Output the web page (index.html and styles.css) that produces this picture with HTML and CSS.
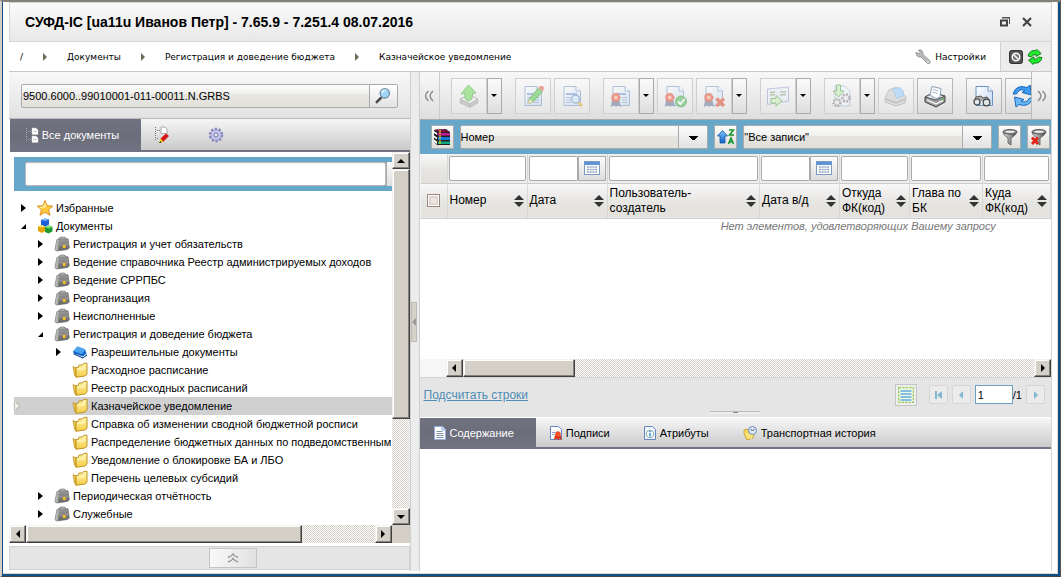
FILE: index.html
```html
<!DOCTYPE html>
<html lang="ru">
<head>
<meta charset="utf-8">
<title>СУФД-IC</title>
<link rel="stylesheet" href="styles.css">
</head>
<body>
<svg class="sprite" aria-hidden="true">
  <defs>
    <linearGradient id="gold" x1="0" y1="0" x2="0" y2="1"><stop offset="0" stop-color="#fff6a8"/><stop offset="1" stop-color="#f5cc48"/></linearGradient>
    <linearGradient id="steel" x1="0" y1="0" x2="1" y2="0"><stop offset="0" stop-color="#eee"/><stop offset=".5" stop-color="#999"/><stop offset="1" stop-color="#444"/></linearGradient>
    <linearGradient id="page" x1="0" y1="0" x2="1" y2="1"><stop offset="0" stop-color="#fff"/><stop offset="1" stop-color="#c3d8f2"/></linearGradient>
    <linearGradient id="bluearrow" x1="0" y1="0" x2="0" y2="1"><stop offset="0" stop-color="#7cc4ff"/><stop offset="1" stop-color="#1663c4"/></linearGradient>
    <linearGradient id="leather" x1="0" y1="0" x2="0" y2="1"><stop offset="0" stop-color="#9a9a9a"/><stop offset="1" stop-color="#666"/></linearGradient>
  </defs>
  <symbol id="i-star" viewBox="0 0 16 16"><path d="M8 .5l2.200 5.200 5.500.4-4.200 3.600 1.500 5.600L8 12.300l-5 3 1.400-5.600L.3 6.100l5.500-.4z" fill="#ffc83d" stroke="#d88a1c" stroke-width=".9"/><path d="M8 2.500l1.400 4-4.900 2.200L2.500 6.900l3.900-.4z" fill="#fff0a0"/></symbol>
  <symbol id="i-cubes" viewBox="0 0 16 16"><path d="M4 2l4-1.500 4 1v5L8.500 8.500 4 7z" fill="#1a5fd8"/><path d="M4 2l4-1.500 4 1L8.500 3z" fill="#7ab4ff"/><path d="M1 8.500l3-1.500 4 1.500v4.500l-3 2-4-2z" fill="#e2a400"/><path d="M1 8.500l3-1.500 4 1.500-3 1z" fill="#ffe568"/><path d="M8 9l4-1.500 3.500 1.500v4.500L11.500 15.500 8 14z" fill="#1f9a30"/><path d="M8 9l4-1.500L15.500 9l-4 1.500z" fill="#7be070"/></symbol>
  <symbol id="i-case" viewBox="0 0 16 16"><path d="M5.500 3.500V2.500Q5.500 1.200 7 1.200h3q1.500 0 1.500 1.300v1" fill="none" stroke="#777" stroke-width="1"/><path d="M3 3.500L5 2.800h9L15.300 12l-2 1.500L2.500 15l-1.500-1.500z" fill="url(#leather)" stroke="#666" stroke-width=".7"/><path d="M3 3.500L4.800 3.500 4 14.500l-1.500.3L1 13.500z" fill="#b4b4b4"/><path d="M5 8.500q5 1.500 9.500-.5" fill="none" stroke="#aaa" stroke-width=".7"/><path d="M9 9h2.500v3H9z" fill="#ffc21a"/></symbol>
  <symbol id="i-folder" viewBox="0 0 16 16"><path d="M1 4.500l3 1.500v9L2.500 13z" fill="#f1cf5c" stroke="#b98b12" stroke-width=".7"/><path d="M4 5.500h2L7 3h3.500l1-1.500 3.500-.3v11L13 14l-9 1.300z" fill="url(#gold)" stroke="#b98b12" stroke-width=".9"/><path d="M5 7h7V3" fill="none" stroke="#fffbd0"/></symbol>
  <symbol id="i-book" viewBox="0 0 16 16"><path d="M1 7.500L5.500 2.500 13 5.500l2 5L11 14 2 10.500z" fill="#1769c8"/><path d="M1.500 7L5.500 2.500l8 3L10 10z" fill="#4ca4f0"/><path d="M3.500 10.500L11 13l4-3.500" fill="none" stroke="#fff"/><path d="M2 10l9 4 4-3" fill="none" stroke="#063f91"/></symbol>
  <symbol id="i-lens" viewBox="0 0 20 20"><path d="M8.500 11.500L3 17" stroke="#777" stroke-width="3" stroke-linecap="round"/><path d="M7.500 12L3 16.500" stroke="#333" stroke-width="1.500" stroke-linecap="round"/><circle cx="12" cy="7" r="5.200" fill="#9fd6f5" stroke="#7892a8" stroke-width="1.500"/><path d="M9 6.500q1-3 4-3" stroke="#eefaff" stroke-width="1.500" fill="none"/></symbol>
  <symbol id="i-pages" viewBox="0 0 14 16"><path d="M1.500 1v13M3 4.500h3M3 12.500h3" stroke="#aaa" stroke-dasharray="1 1"/><path d="M7 1h4l2 2v4.500H7zM7 9h4l2 2v4.500H7z" fill="#fff" stroke="#ccc" stroke-width=".5"/><path d="M8.500 4.500h3M8.500 12.500h3" stroke="#bbb"/></symbol>
  <symbol id="i-pagesedit" viewBox="0 0 16 18"><path d="M1.500 1v13M3 4.500h3M3 12.500h2" stroke="#777" stroke-dasharray="1 1"/><path d="M7 1h4l2 2v4.500H7z" fill="#fff" stroke="#aaa"/><path d="M6.500 12.500L12 7.500l3 2.500-6 6z" fill="#d81818"/><path d="M6.500 12.500L9 16l-4 1z" fill="#ffe000"/><path d="M5 17l1.500-2 1 1.500z" fill="#111"/></symbol>
  <symbol id="i-gear" viewBox="0 0 16 16"><circle cx="8" cy="8" r="6.300" fill="none" stroke="#8081bd" stroke-width="2" stroke-dasharray="2.200 1.760"/><circle cx="8" cy="8" r="5.300" fill="#c5c6ec" stroke="#8788c0" stroke-width=".8"/><circle cx="8" cy="8" r="2" fill="#eee" stroke="#7374b0"/></symbol>
  <symbol id="i-wrench" viewBox="0 0 16 16"><path d="M1 3l3 2 1-1.500L3.500 1Q8 0 8 5.500l7 6.500q1 3-2.500 2.500L6 8Q1 8.500 1 3z" fill="#bbb" stroke="#888" stroke-width=".8"/><circle cx="13" cy="13" r=".8" fill="#fff"/></symbol>
  <symbol id="i-block" viewBox="0 0 14 14"><rect x=".5" y=".5" width="13" height="13" rx="2" fill="#555" stroke="#333"/><circle cx="7" cy="7" r="3.800" fill="#777" stroke="#fff" stroke-width="1.400"/><path d="M4.500 4.500l5 5" stroke="#fff" stroke-width="1.400"/></symbol>
  <symbol id="i-sync" viewBox="0 0 16 16"><path d="M1 7Q2.500 1 8.500 1.500L10 .5 14 4.500 9 7.500V5.500Q6 5 4.500 8z" fill="#22e830" stroke="#08780f" stroke-width=".9"/><path d="M15 8.500Q13.500 15 7 14l-1 1.500L1.500 11 7 8v2q3 1 4.500-2z" fill="#22e830" stroke="#08780f" stroke-width=".9"/></symbol>
  <symbol id="i-restore" viewBox="0 0 10 10"><path d="M2 0h8v7H9V1.500H2z" fill="#555"/><path d="M1 3.500h6V8.500H1z" fill="none" stroke="#444" stroke-width="2"/></symbol>
  <symbol id="i-close" viewBox="0 0 10 10"><path d="M1 1l8 8M9 1L1 9" stroke="#444" stroke-width="2.200"/></symbol>
  <symbol id="i-doc" viewBox="0 0 24 24"><path d="M4 2.500h12l4.500 4.500v14.500H4z" fill="url(#page)" stroke="#6c93c4"/><path d="M16 2.500V7h4.500" fill="#fff" stroke="#6c93c4"/></symbol>
  <symbol id="i-lines" viewBox="0 0 24 24"><path d="M6 9h11v2H6z" fill="#6e8fd0"/><path d="M6 13.500h5M6 16h5M6 18.500h5M13 13.500h5M13 16h5M13 18.500h5" stroke="#7d9dd0"/></symbol>
  <symbol id="i-seal" viewBox="0 0 24 24"><path d="M3 15l-1 8 3.500-2L7 23V15zM10 15l2 8-3-2-2 2v-8z" fill="#566a8c"/><circle cx="6.800" cy="13.500" r="4.300" fill="#ec4a2c" stroke="#c53014" stroke-dasharray="1.500 1"/><circle cx="6.800" cy="13.500" r="1.700" fill="#ffb8a0"/></symbol>
  <symbol id="i-send" viewBox="0 0 24 24"><path d="M3 15l9-4 9 4-8 5z" fill="#ececec" stroke="#888"/><path d="M3 15v4l10 4.500V20zM21 15v4l-8 4.500V20z" fill="#aaa" stroke="#888" stroke-width=".6"/><path d="M11.500 1L19 9l-3.500.5Q16 15 12 17q-5 0-4-7.500L4 10z" fill="#63d94c" stroke="#36a32b"/></symbol>
  <symbol id="i-pencil" viewBox="0 0 24 24"><path d="M8 15L17.500 4l4 3.500L12 18l-5 2z" fill="#48c33b" stroke="#23891f"/><path d="M17.500 4l1.500-2q3-1 4.500 2l-2 3.500z" fill="#e75848"/><path d="M8 15l4 3-5 2z" fill="#f2d9a0"/></symbol>
  <symbol id="i-find" viewBox="0 0 24 24"><path d="M18 18l4 4" stroke="#d9a820" stroke-width="2.500"/><circle cx="15.500" cy="15" r="4" fill="#c9e7ff" stroke="#5887bd" stroke-width="1.300"/></symbol>
  <symbol id="i-ok" viewBox="0 0 24 24"><circle cx="18" cy="17.500" r="5.500" fill="#41b54a" stroke="#289335"/><path d="M15 17.500l2.500 2.500 4-5" fill="none" stroke="#fff" stroke-width="2"/></symbol>
  <symbol id="i-del" viewBox="0 0 24 24"><path d="M14.500 14.500l7.500 7.500M22 14.500L14.500 22" stroke="#dc3b1c" stroke-width="3.200"/></symbol>
  <symbol id="i-card" viewBox="0 0 24 24"><path d="M1.500 5l21-2v14l-21 3.500z" fill="#e7edf8" stroke="#8a9bc8"/><path d="M4 8.500l5-.5M4 11l5-.5M14 8h6M14 11l6-.5" stroke="#7fa36c" stroke-width="1.500"/><path d="M5 14.500h5v-3l6 5.500-6 5v-3H5z" fill="#c9f4b6" stroke="#49a036"/></symbol>
  <symbol id="i-process" viewBox="0 0 24 24"><path d="M5 2h10l5 5v15H5z" fill="#eef4ff" stroke="#96a9c8"/><path d="M6.500 1v6H3l5.500 6L14 7h-3.500V1z" fill="#c0efb0" stroke="#43943a"/><circle cx="16" cy="14" r="3.500" fill="#eee" stroke="#777" stroke-width="2.500" stroke-dasharray="2 1.200"/><circle cx="7" cy="18.500" r="3.300" fill="#eee" stroke="#777" stroke-width="2.500" stroke-dasharray="1.800 1"/></symbol>
  <symbol id="i-printblue" viewBox="0 0 24 24"><path d="M1 14l4-8 7-3 10 10-1 6-9 3-11-4z" fill="#ccc" stroke="#999"/><path d="M8 5l8-1.500q4 3 4 8l-8 3q0-6-4-9.500z" fill="#8cc8ff" stroke="#6ea9df"/><path d="M2 15l10 4 9-4" fill="none" stroke="#777"/></symbol>
  <symbol id="i-print" viewBox="0 0 24 24"><path d="M2 13l8-4 12 3v6l-9 5-11-5z" fill="#999" stroke="#444"/><path d="M2 13l8-4 12 3-9 4z" fill="#e8e8e8" stroke="#555"/><path d="M7 11l2-8.500 9 2-1 8.500-4 1.500z" fill="#fff" stroke="#8aa0b8"/><path d="M10 5.500l5 1.200M9.500 8l5 1.200" stroke="#9db7d5"/><path d="M4 16l9 4 7-3.500" fill="none" stroke="#eee" stroke-width="1.500"/><circle cx="19.500" cy="15" r="1" fill="#39c23d"/></symbol>
  <symbol id="i-binocular" viewBox="0 0 24 24"><path d="M2 17l2-4 5-1 2 2 4-1 3 4" fill="#aaa" stroke="#555"/><circle cx="5" cy="18" r="3" fill="#dfe5e8" stroke="#444" stroke-width="1.200"/><circle cx="14.500" cy="18.500" r="3.300" fill="#dfe5e8" stroke="#444" stroke-width="1.200"/></symbol>
  <symbol id="i-refresh" viewBox="0 0 24 24"><path d="M2 10Q5 0 16 3.500L19 1l1.500 10L11 8.500l3-2Q8 4 5.500 10z" fill="#3f9bee" stroke="#1767bc"/><path d="M22 14Q18 24 8 20.500L5 23 3.500 13l9.500 2.500-3 2q6 2 8.500-3.500z" fill="#69b9f7" stroke="#1767bc"/></symbol>
  <symbol id="i-books" viewBox="0 0 18 18"><path d="M1 2L13 1l4 3v13H4L1 14z" fill="#222"/><path d="M4 5h13v2.500H5z" fill="#c71991"/><path d="M2 1.500h10l4 2.500H5z" fill="#861041"/><path d="M5 9h12v3H5z" fill="#1678d6"/><path d="M5 13.500h12V16H5z" fill="#10a783"/><path d="M1 3l3 2v2L1 5zM1 7.500l3 2v2l-3-2zM1 11.500l3 2V16l-3-2z" fill="#fff"/><path d="M7 2v14" stroke="#e8d22a" stroke-width="1.200" stroke-dasharray="4 1"/></symbol>
  <symbol id="i-sort" viewBox="0 0 18 18"><path d="M5.500 2.500L10.500 8H8v7H3V8H.5z" fill="url(#bluearrow)" stroke="#145cab" stroke-width=".8"/><path d="M12 2h4.500L12.500 7H17M11.500 16l2.500-6 2.500 6M12.500 14h3" stroke="#13942a" stroke-width="1.500" fill="none"/></symbol>
  <symbol id="i-funnel" viewBox="0 0 18 18"><path d="M2 4q0 3 5 6v5l3 2V10q5-3 6-6z" fill="url(#steel)" stroke="#555" stroke-width=".8"/><ellipse cx="9" cy="3.800" rx="7" ry="2.300" fill="#999" stroke="#555"/><ellipse cx="9" cy="3.800" rx="4.500" ry="1" fill="#eee"/></symbol>
  <symbol id="i-redx" viewBox="0 0 18 18"><path d="M2 9.500l6 6.500M8 9.500L2 16" stroke="#e32416" stroke-width="2.800"/></symbol>
  <symbol id="i-calendar" viewBox="0 0 16 14"><rect x=".5" y=".5" width="15" height="13" fill="#fff" stroke="#7d9cc4"/><path d="M1 1h14v3H1z" fill="#5f92d3"/><path d="M3 6h10M3 8.500h10M3 11h10" stroke="#8fa3bd" stroke-width="1.300" stroke-dasharray="2 .7"/></symbol>
  <symbol id="i-text" viewBox="0 0 12 14"><path d="M.5.500h8l3 3v10H.5z" fill="#fff" stroke="#93aee0"/><path d="M8 .5v3.500h3.500" fill="#dce7fa" stroke="#93aee0"/><path d="M2.500 5.500h6M2.500 7.500h7M2.500 9.500h7M2.500 11.500h7" stroke="#8292a8"/></symbol>
  <symbol id="i-sign" viewBox="0 0 12 14"><path d="M.5.500h8l3 3v10H.5z" fill="#fff" stroke="#6485bd"/><path d="M2 6.500h4M2 8.500h3" stroke="#95a9d0"/><path d="M5 9l-1 5 2.500-1.500L8.500 14l1-1.500L12 14l-1.500-5z" fill="#d8310e"/><circle cx="8" cy="8" r="2.700" fill="#f4512d"/></symbol>
  <symbol id="i-info" viewBox="0 0 12 14"><path d="M.5.500h8l3 3v10H.5z" fill="#eef5ff" stroke="#6485bd"/><circle cx="6" cy="8" r="3.700" fill="#fff" stroke="#8aa"/><path d="M6 7v3.500M6 5v1.200" stroke="#248bd8" stroke-width="1.500"/></symbol>
  <symbol id="i-clock" viewBox="0 0 14 14"><path d="M1 4l3-1 2 3 5 2-1 4-6 2-2-4-1-3z" fill="#f6d95c" stroke="#c79a26" stroke-width=".8"/><path d="M2 7.500l8 2.500M3 10.500l6 2" stroke="#fff0a0"/><circle cx="9.500" cy="4.500" r="4" fill="#dbe8f8" stroke="#6e88b8"/><path d="M7.500 3l2 2 2-2" fill="none" stroke="#555"/></symbol>
  <symbol id="i-rows" viewBox="0 0 16 16"><rect x=".7" y=".7" width="14.600" height="14.600" fill="#eef8e4" stroke="#9ccb62" stroke-width="1.300" stroke-dasharray="2.500 1"/><path d="M2.500 3h11v2h-11zM2.500 6h11v2h-11zM2.500 9h11v2h-11zM2.500 12h11v2h-11z" fill="#84bfdf"/></symbol>
</svg>

<div class="window">
  <header class="titlebar">
    <h1>СУФД-IC [ua11u Иванов Петр] - 7.65.9 - 7.251.4 08.07.2016</h1>
    <button class="plain" aria-label="Восстановить"><svg class="s10"><use href="#i-restore"/></svg></button>
    <button class="plain" aria-label="Закрыть"><svg class="s10"><use href="#i-close"/></svg></button>
  </header>

  <div class="crumbbar">
    <nav class="crumbs">
      <a href="#">/</a><i class="sep"></i>
      <a href="#">Документы</a><i class="sep"></i>
      <a href="#">Регистрация и доведение бюджета</a><i class="sep"></i>
      <a href="#">Казначейское уведомление</a>
    </nav>
    <button class="plain settings"><svg class="s16"><use href="#i-wrench"/></svg>Настройки</button>
    <div class="status">
      <button class="plain" aria-label="Остановить"><svg class="s14"><use href="#i-block"/></svg></button>
      <button class="plain" aria-label="Синхронизация"><svg class="s16"><use href="#i-sync"/></svg></button>
    </div>
  </div>

  <main class="work">
    <section class="side">
      <div class="search">
        <div class="searchbox">
          <input type="text" aria-label="Организация" value="9500.6000..99010001-011-00011.N.GRBS">
          <button aria-label="Найти"><svg class="s18"><use href="#i-lens"/></svg></button>
        </div>
      </div>
      <div class="tabs sidetabs">
        <button class="tab active"><svg class="tabicon"><use href="#i-pages"/></svg>Все документы</button>
        <button class="tab icononly" aria-label="Правка дерева"><svg class="s18"><use href="#i-pagesedit"/></svg></button>
        <button class="tab icononly" aria-label="Параметры"><svg class="s16"><use href="#i-gear"/></svg></button>
      </div>
      <div class="treewrap">
        <div class="treepane">
          <div class="treefilter"><input type="text" aria-label="Фильтр дерева"><button aria-label="Найти в дереве"></button></div>
          <ul class="tree">
            <li><i class="closed"></i><svg class="s16"><use href="#i-star"/></svg>Избранные</li>
            <li><i class="open"></i><svg class="s16"><use href="#i-cubes"/></svg>Документы</li>
            <li class="l1"><i class="closed"></i><svg class="s16"><use href="#i-case"/></svg>Регистрация и учет обязательств</li>
            <li class="l1"><i class="closed"></i><svg class="s16"><use href="#i-case"/></svg>Ведение справочника Реестр администрируемых доходов</li>
            <li class="l1"><i class="closed"></i><svg class="s16"><use href="#i-case"/></svg>Ведение СРРПБС</li>
            <li class="l1"><i class="closed"></i><svg class="s16"><use href="#i-case"/></svg>Реорганизация</li>
            <li class="l1"><i class="closed"></i><svg class="s16"><use href="#i-case"/></svg>Неисполненные</li>
            <li class="l1"><i class="open"></i><svg class="s16"><use href="#i-case"/></svg>Регистрация и доведение бюджета</li>
            <li class="l2"><i class="closed"></i><svg class="s16"><use href="#i-book"/></svg>Разрешительные документы</li>
            <li class="l2"><i></i><svg class="s16"><use href="#i-folder"/></svg>Расходное расписание</li>
            <li class="l2"><i></i><svg class="s16"><use href="#i-folder"/></svg>Реестр расходных расписаний</li>
            <li class="l2 selected"><i></i><svg class="s16"><use href="#i-folder"/></svg>Казначейское уведомление</li>
            <li class="l2"><i></i><svg class="s16"><use href="#i-folder"/></svg>Справка об изменении сводной бюджетной росписи</li>
            <li class="l2"><i></i><svg class="s16"><use href="#i-folder"/></svg>Распределение бюджетных данных по подведомственным</li>
            <li class="l2"><i></i><svg class="s16"><use href="#i-folder"/></svg>Уведомление о блокировке БА и ЛБО</li>
            <li class="l2"><i></i><svg class="s16"><use href="#i-folder"/></svg>Перечень целевых субсидий</li>
            <li class="l1"><i class="closed"></i><svg class="s16"><use href="#i-case"/></svg>Периодическая отчётность</li>
            <li class="l1"><i class="closed"></i><svg class="s16"><use href="#i-case"/></svg>Служебные</li>
          </ul>
        </div>
        <div class="scroll vertical">
          <button class="up" aria-label="Вверх"></button><div class="thumb"></div><div class="track"></div><button class="down" aria-label="Вниз"></button>
        </div>
      </div>
      <div class="scroll horizontal sidescroll">
        <button class="left" aria-label="Влево"></button><div class="thumb"></div><div class="track"></div><button class="right" aria-label="Вправо"></button><div class="corner"></div>
      </div>
      <div class="sidefoot"><button aria-label="Свернуть"><svg viewBox="0 0 12 10"><path d="M1 4.500Q5 3 6 1q1 2 5 3.500M1 9Q5 7.500 6 5.500 7 7.500 11 9" fill="none" stroke="#999" stroke-width="1.400"/></svg></button></div>
    </section>

    <div class="splitter"><button aria-label="Свернуть панель"></button></div>

    <section class="content">
      <div class="toolbar">
        <button class="more" aria-label="Назад"><svg viewBox="0 0 10 12"><path d="M4.500 1Q2 3 1.500 6 2 9 4.500 11M9 1Q6.500 3 6 6q.5 3 3 5" fill="none" stroke="#888" stroke-width="1.500"/></svg></button>
        <div class="tools">
          <div class="group"><div class="split"><button class="tool off" aria-label="Отправить"><svg class="s24"><use href="#i-send"/></svg></button><button class="drop" aria-label="Ещё"></button></div></div>
          <div class="group">
            <button class="tool off" aria-label="Изменить"><svg class="s24"><use href="#i-doc"/><use href="#i-lines"/><use href="#i-pencil"/></svg></button>
            <button class="tool off" aria-label="Просмотр"><svg class="s24"><use href="#i-doc"/><use href="#i-lines"/><use href="#i-find"/></svg></button>
          </div>
          <div class="group">
            <div class="split"><button class="tool off" aria-label="Подписать"><svg class="s24"><use href="#i-doc"/><use href="#i-lines"/><use href="#i-seal"/></svg></button><button class="drop" aria-label="Ещё"></button></div>
            <button class="tool off" aria-label="Проверить подпись"><svg class="s24"><use href="#i-doc"/><use href="#i-seal"/><use href="#i-ok"/></svg></button>
            <div class="split"><button class="tool off" aria-label="Удалить подпись"><svg class="s24"><use href="#i-doc"/><use href="#i-seal"/><use href="#i-del"/></svg></button><button class="drop" aria-label="Ещё"></button></div>
          </div>
          <div class="group"><div class="split"><button class="tool off" aria-label="Передать"><svg class="s24"><use href="#i-card"/></svg></button><button class="drop" aria-label="Ещё"></button></div></div>
          <div class="group">
            <div class="split"><button class="tool off" aria-label="Обработать"><svg class="s24"><use href="#i-process"/></svg></button><button class="drop" aria-label="Ещё"></button></div>
            <button class="tool off" aria-label="Печать формы"><svg class="s24"><use href="#i-printblue"/></svg></button>
            <button class="tool" aria-label="Печать"><svg class="s24"><use href="#i-print"/></svg></button>
          </div>
          <div class="group">
            <button class="tool" aria-label="Поиск"><svg class="s24"><use href="#i-doc"/><use href="#i-binocular"/></svg></button>
            <button class="tool" aria-label="Обновить"><svg class="s24"><use href="#i-refresh"/></svg></button>
          </div>
        </div>
        <button class="more next" aria-label="Вперёд"><svg viewBox="0 0 10 12"><path d="M1 1q2.500 2 3 5-.5 3-3 5M5.500 1q2.500 2 3 5-.5 3-3 5" fill="none" stroke="#888" stroke-width="1.500"/></svg></button>
      </div>

      <div class="filterbar">
        <button class="square" aria-label="Справочник"><svg class="s18"><use href="#i-books"/></svg></button>
        <div class="combo"><select aria-label="Поле"><option>Номер</option></select></div>
        <button class="square" aria-label="Сортировка"><svg class="s18"><use href="#i-sort"/></svg></button>
        <div class="combo"><select aria-label="Фильтр"><option>"Все записи"</option></select></div>
        <button class="square" aria-label="Фильтровать"><svg class="s18"><use href="#i-funnel"/></svg></button>
        <button class="square" aria-label="Сбросить фильтр"><svg class="s18"><use href="#i-funnel"/><use href="#i-redx"/></svg></button>
      </div>

      <div class="gridarea">
        <table class="grid">
          <colgroup><col class="c27"><col class="c80"><col class="c80"><col><col class="c80"><col class="c70"><col class="c73"><col class="c68"></colgroup>
          <thead>
            <tr class="filters">
              <td></td>
              <td><input type="text" aria-label="Номер"></td>
              <td><div class="date"><input type="text" aria-label="Дата"><button aria-label="Календарь"><svg class="cal"><use href="#i-calendar"/></svg></button></div></td>
              <td><input type="text" aria-label="Пользователь-создатель"></td>
              <td><div class="date"><input type="text" aria-label="Дата в/д"><button aria-label="Календарь"><svg class="cal"><use href="#i-calendar"/></svg></button></div></td>
              <td><input type="text" aria-label="Откуда ФК(код)"></td>
              <td><input type="text" aria-label="Глава по БК"></td>
              <td><input type="text" aria-label="Куда ФК(код)"></td>
            </tr>
            <tr class="heads">
              <th><input type="checkbox" aria-label="Выбрать все"></th>
              <th><div>Номер<i></i></div></th>
              <th><div>Дата<i></i></div></th>
              <th><div>Пользователь-<br>создатель<i></i></div></th>
              <th><div>Дата в/д<i></i></div></th>
              <th><div>Откуда<br>ФК(код)<i></i></div></th>
              <th><div>Глава по<br>БК<i></i></div></th>
              <th><div>Куда<br>ФК(код)<i></i></div></th>
            </tr>
          </thead>
        </table>
        <p class="empty">Нет элементов, удовлетворяющих Вашему запросу</p>
      </div>
      <div class="scroll horizontal gridscroll">
        <button class="left" aria-label="Влево"></button><div class="thumb"></div><div class="track"></div><button class="right" aria-label="Вправо"></button>
      </div>

      <div class="pager">
        <a href="#">Подсчитать строки</a>
        <button class="rows" aria-label="Строки"><svg class="s16"><use href="#i-rows"/></svg></button>
        <button class="page" aria-label="Первая"><svg viewBox="0 0 8 8"><path d="M1 0h2v8H1zM8 0v8L3 4z"/></svg></button>
        <button class="page" aria-label="Предыдущая"><svg viewBox="0 0 8 8"><path d="M6 0v8L2 4z"/></svg></button>
        <label><input type="text" value="1" aria-label="Страница">/1</label>
        <button class="page" aria-label="Следующая"><svg viewBox="0 0 8 8"><path d="M2 0v8l4-4z"/></svg></button>
      </div>
      <div class="hsplit"><i></i></div>
      <div class="tabs detail">
        <button class="tab active"><svg class="doc"><use href="#i-text"/></svg>Содержание</button>
        <button class="tab"><svg class="doc"><use href="#i-sign"/></svg>Подписи</button>
        <button class="tab"><svg class="doc"><use href="#i-info"/></svg>Атрибуты</button>
        <button class="tab"><svg class="s14"><use href="#i-clock"/></svg>Транспортная история</button>
      </div>
      <div class="detailbody"></div>
    </section>
  </main>
</div>
</body>
</html>
```
FILE: styles.css
```css
* { box-sizing: border-box; }
html, body { height: 100%; }
body {
  margin: 0;
  background: #fff;
  color: #000;
  font: 11px/14px "Liberation Sans", Arial, sans-serif;
  overflow: hidden;
}
button, input, select { font: inherit; color: inherit; margin: 0; padding: 0; border-radius: 0; }
button { display: flex; align-items: center; justify-content: center; border: 0; background: none; }
svg { display: block; flex: none; }
.sprite { position: absolute; width: 0; height: 0; }
.s10 { width: 10px; height: 10px; }
.s14 { width: 14px; height: 14px; }
.s16 { width: 16px; height: 16px; }
.s18 { width: 18px; height: 18px; }
.s24 { width: 24px; height: 24px; }
.doc { width: 12px; height: 14px; }
.tabicon { width: 14px; height: 16px; }
.cal { width: 16px; height: 14px; }

.window {
  height: 100%;
  display: flex;
  flex-direction: column;
  padding: 0 8px 5px 7px;
  border: solid;
  border-width: 2px 1px 1px 2px;
  border-color: #85827b #555 #444 #d4d0c8;
  box-shadow: inset 1px 0 #10508a, inset -2px -2px #10508a, inset -3px -3px #ddd8cc;
}

.titlebar {
  display: flex;
  align-items: center;
  gap: 12px;
  height: 40px;
  padding: 0 19px 0 15px;
  border: 1px solid #d5d5d5;
  background: linear-gradient(#fafafa, #e8e8e8);
}
.titlebar h1 { flex: 1; margin: 0; font-size: 14px; line-height: 16px; }

.crumbbar { display: flex; align-items: stretch; height: 29px; }
.crumbs { flex: 1; display: flex; align-items: center; padding-left: 11px; }
.crumbs a { color: #000; text-decoration: none; }
.crumbs a, .settings { font-family: "DejaVu Sans", sans-serif; font-size: 9px; }
.sep { margin: 0 20px; border: solid transparent; border-width: 4px 0 4px 4px; border-left-color: #6e6a5a; }
.settings { gap: 4px; padding-right: 14px; }
.status { display: flex; align-items: center; gap: 4px; padding: 0 8px; border: solid #d0d0d0; border-width: 0 1px 0 1px; background: #ececec; }

.work { flex: 1; display: flex; min-height: 0; border-top: 1px solid #c8c8c8; }

.side { flex: none; width: 38.400%; display: flex; flex-direction: column; min-width: 0; }
.search { padding: 12px; height: 47px; border-bottom: 1px solid #bbb; background: linear-gradient(#f8f8f8, #e2e2e2); }
.searchbox { display: flex; height: 24px; border: 1px solid #aaa; border-radius: 2px; background: linear-gradient(#fbfbfb, #f0f0ee 40%, #e6e5e0 42%, #e3e1db); }
.searchbox input { flex: 1; min-width: 0; border: 0; padding: 0 1px; background: none; }
.searchbox button { width: 28px; border-left: 1px solid #aaa; background: linear-gradient(#fff, #e2e2e2); }

.tabs { display: flex; height: 33px; border-bottom: 2px solid #717382; background: linear-gradient(#f6f6f6, #cacaca); }
.tab { gap: 4px; padding: 0 20px 0 14px; }
.tab.active { color: #fff; background: linear-gradient(#717382, #6b6d7a 50%, #717382); }
.sidetabs { margin-left: 1px; }
.sidetabs .active { width: 131px; gap: 3px; padding: 0 7px 0 0; }
.sidetabs .icononly { width: 54px; padding: 0 12px 0 0; }

.treewrap { flex: 1; display: flex; min-height: 0; }
.treepane { flex: 1; min-width: 0; overflow: hidden; padding: 5px 0 0 5px; }
.treefilter { height: 34px; padding: 5px 0 5px 11px; background: #67a7c9; display: flex; }
.treefilter input { flex: 1; min-width: 0; border: 1px solid #b9b9b9; background: linear-gradient(#f6f6f6, #fff 15%); border-radius: 2px; }
.treefilter button { width: 6px; border-left: 1px solid #aaa; background: linear-gradient(#fafafa, #ddd); }
.tree { list-style: none; margin: 8px 0 0; padding: 0; }
.tree li { display: flex; align-items: center; height: 18px; padding-left: 7px; white-space: nowrap; }
.tree li svg { margin-right: 3px; }
.tree li.l1 { padding-left: 24px; }
.tree li.l2 { padding-left: 42px; }
.tree i { width: 16px; height: 8px; flex: none; }
.tree i::before { content: ""; display: block; width: 0; border: solid transparent; }
.tree i.closed::before { border-width: 4px 0 4px 5px; border-left-color: #000; }
.tree i.open::before { border-width: 0 0 5px 5px; border-bottom-color: #000; margin-top: 2px; }
.tree .selected { background: #d0d0d0; position: relative; }
.tree .selected::before { content: ""; position: absolute; left: 1px; top: 5px; border: solid transparent; border-width: 4px 0 4px 4px; border-left-color: #f4f1e8; filter: drop-shadow(0 0 1px #8d8774); }

.scroll { display: flex; flex: none; }
.vertical { flex-direction: column; width: 18px; }
.scroll button { width: 17px; height: 17px; flex: none; }
.scroll button, .thumb { background: #d4d0c8; border: 1px solid; border-color: #f4f2ee #404040 #404040 #f4f2ee; box-shadow: inset -1px -1px #85827b, inset 1px 1px #fff; }
.vertical button { width: 18px; }
.horizontal { height: 18px; }
.horizontal button { width: 17px; height: 18px; }
.scroll button::before { content: ""; border: 4px solid transparent; }
.scroll .left::before { border-left: 0; border-right-color: #000; }
.scroll .right::before { border-right: 0; border-left-color: #000; }
.scroll .up::before { border-top: 0; border-bottom-color: #000; }
.scroll .down::before { border-bottom: 0; border-top-color: #000; }
.track { flex: 1; background: repeating-conic-gradient(#d4d0c8 0 25%, #fff 0 50%) 0 0 / 2px 2px; }
.vertical .thumb { height: 67%; }
.sidescroll .thumb { width: 69%; }
.corner { width: 18px; background: #d4d0c8; }
.gridscroll { border-left: 26px solid #f6f6f6; }
.gridscroll .thumb { width: 112px; }
.sidefoot { flex: none; display: flex; align-items: center; height: 24px; margin: 3px 0 1px; padding-left: 199px; background: #e5e5e5; border: 1px solid #d2d2d2; }
.sidefoot button { width: 48px; height: 20px; border: 1px solid #c5c5c5; background: linear-gradient(100deg, #fafafa, #e0e0e0); }
.sidefoot svg { width: 12px; height: 10px; }

.splitter { width: 10px; flex: none; display: flex; align-items: center; border: solid #cfcfcf; border-width: 0 1px; background: #ececec; }
.splitter button { width: 6px; height: 40px; background: #d4d2c9; border: 1px solid #c0beb4; }
.splitter button::before { content: ""; border: solid transparent; border-width: 4px 4px 4px 0; border-right-color: #999; }

.content { flex: 1; min-width: 0; display: flex; flex-direction: column; border-right: 1px solid #d5d5d5; }
.toolbar { display: flex; height: 48px; flex: none; border-bottom: 1px solid #aaa; background: linear-gradient(#f8f8f8, #dedede); }
.more { width: 20px; flex: none; border-right: 1px solid #ccc; }
.more svg { width: 10px; height: 12px; }
.next { border-right: 0; border-left: 1px solid #bbb; }
.tools { flex: 1; display: flex; align-items: center; gap: 13px; min-width: 0; overflow: hidden; padding-left: 11px; }
.group { display: flex; gap: 3px; flex: none; }
.split { display: flex; }
.tool { width: 36px; height: 36px; border: 1px solid #b5b5b5; background: linear-gradient(#fafafa, #dcdcdc); }
.tool.off { border-color: #cfcfcf; background: linear-gradient(#f8f8f8, #e6e6e6); }
.off svg { opacity: .5; }
.drop { width: 15px; height: 36px; border: 1px solid #aaa; background: linear-gradient(#fbfbfb, #dedede); }
.drop::before { content: ""; border: solid transparent; border-width: 3px 3px 0; border-top-color: #000; }

.filterbar { display: flex; align-items: center; gap: 6px; height: 34px; flex: none; padding: 0 1px 0 11px; background: #67a7c9; }
.square { width: 23px; height: 24px; flex: none; border: 1px solid #aaa; background: linear-gradient(#fdfdfd, #deddda); }
.combo { flex: 1; min-width: 0; display: grid; height: 24px; border: 1px solid #aaa; border-radius: 2px; background: linear-gradient(#fbfbfb, #f0f0ee 45%, #e4e3de 47%, #e2e0da); }
.combo select { grid-area: 1 / 1; appearance: none; border: 0; background: none; width: 100%; height: 22px; }
.combo::after { content: ""; grid-area: 1 / 1; justify-self: end; width: 28px; pointer-events: none; border-left: 1px solid #aaa; background: linear-gradient(#000, #000) 10px 10px / 9px 1px no-repeat, linear-gradient(#000, #000) 11px 11px / 7px 1px no-repeat, linear-gradient(#000, #000) 12px 12px / 5px 1px no-repeat, linear-gradient(#000, #000) 13px 13px / 3px 1px no-repeat, linear-gradient(#fcfcfc, #e2e2e2); }

.gridarea { flex: none; height: 205px; }
.grid { width: 100%; table-layout: fixed; border-collapse: collapse; }
.c27 { width: 27px; }
.c68 { width: 68px; }
.c70 { width: 70px; }
.c73 { width: 73px; }
.c80 { width: 80px; }
.grid td, .grid th { padding: 0 1px; border-right: 1px solid #d8d8d8; border-left: 1px solid #f5f5f5; font-weight: normal; text-align: left; }
.filters td { height: 29px; background: #eee; }
.filters td:first-child, .heads th { background: linear-gradient(#f8f8f8, #e5e4e0 60%, #e2e1dc); }
.filters input { display: block; width: 100%; height: 25px; border: 1px solid #aaa; border-radius: 2px; background: #fff; }
.date { display: flex; }
.date input { flex: 1; min-width: 0; }
.date button { width: 28px; height: 25px; border: 1px solid #aaa; background: linear-gradient(#fdfdfd, #ddd); }
.heads th { height: 35px; border-top: 1px solid #ccc; border-bottom: 1px solid #ccc; }
.heads th div { position: relative; padding: 0 14px 0 1px; line-height: 15px; white-space: nowrap; font-size: 12px; }
.heads i { position: absolute; right: 2px; top: 50%; width: 10px; height: 12px; margin-top: -6px; }
.heads i::before, .heads i::after { content: ""; display: block; border: solid transparent; }
.heads i::before { border-width: 0 5px 5px; border-bottom-color: #333; margin-bottom: 2px; }
.heads i::after { border-width: 5px 5px 0; border-top-color: #333; }
.heads input { appearance: none; display: block; width: 13px; height: 13px; margin: 0 auto; border: 1px solid #9c8578; background: #eee7e0; box-shadow: inset 0 0 0 1px #fff, inset 0 0 0 3px #ddd5cf; }
.empty { margin: 0 0 0 246px; text-align: center; font-style: italic; color: #777; }

.pager { display: flex; align-items: center; height: 34px; flex: none; padding: 0 2px 0 4px; background: #e5e5e5; border-top: 1px solid #d5d5d5; }
.pager a { margin-right: auto; color: #4d8cb5; font-size: 12px; }
.rows { width: 22px; height: 22px; border: 1px solid #c5c5c5; margin-right: 12px; background: #eee; }
.page { width: 19px; height: 19px; margin-right: 4px; border: 1px solid #d5d5d5; border-radius: 2px; background: #ebebeb; }
.page svg { width: 8px; height: 8px; fill: #82b8cf; }
.pager label { display: flex; align-items: center; margin-right: 4px; }
.pager input { width: 38px; height: 19px; padding-left: 2px; border: 1px solid #6c9fc0; background: #fff; }
.hsplit { height: 6px; flex: none; display: flex; justify-content: center; background: #e5e5e5; }
.hsplit i { width: 50px; height: 3px; border-top: 1px solid #bbb; background: linear-gradient(#888, #888) 50% 0 / 5px 1px no-repeat #eee; }
.detail { flex: none; height: 32px; border-top: 1px solid #fff; }
.detail .active { padding-right: 22px; }
.detailbody { flex: 1; background: #fff; }
```
